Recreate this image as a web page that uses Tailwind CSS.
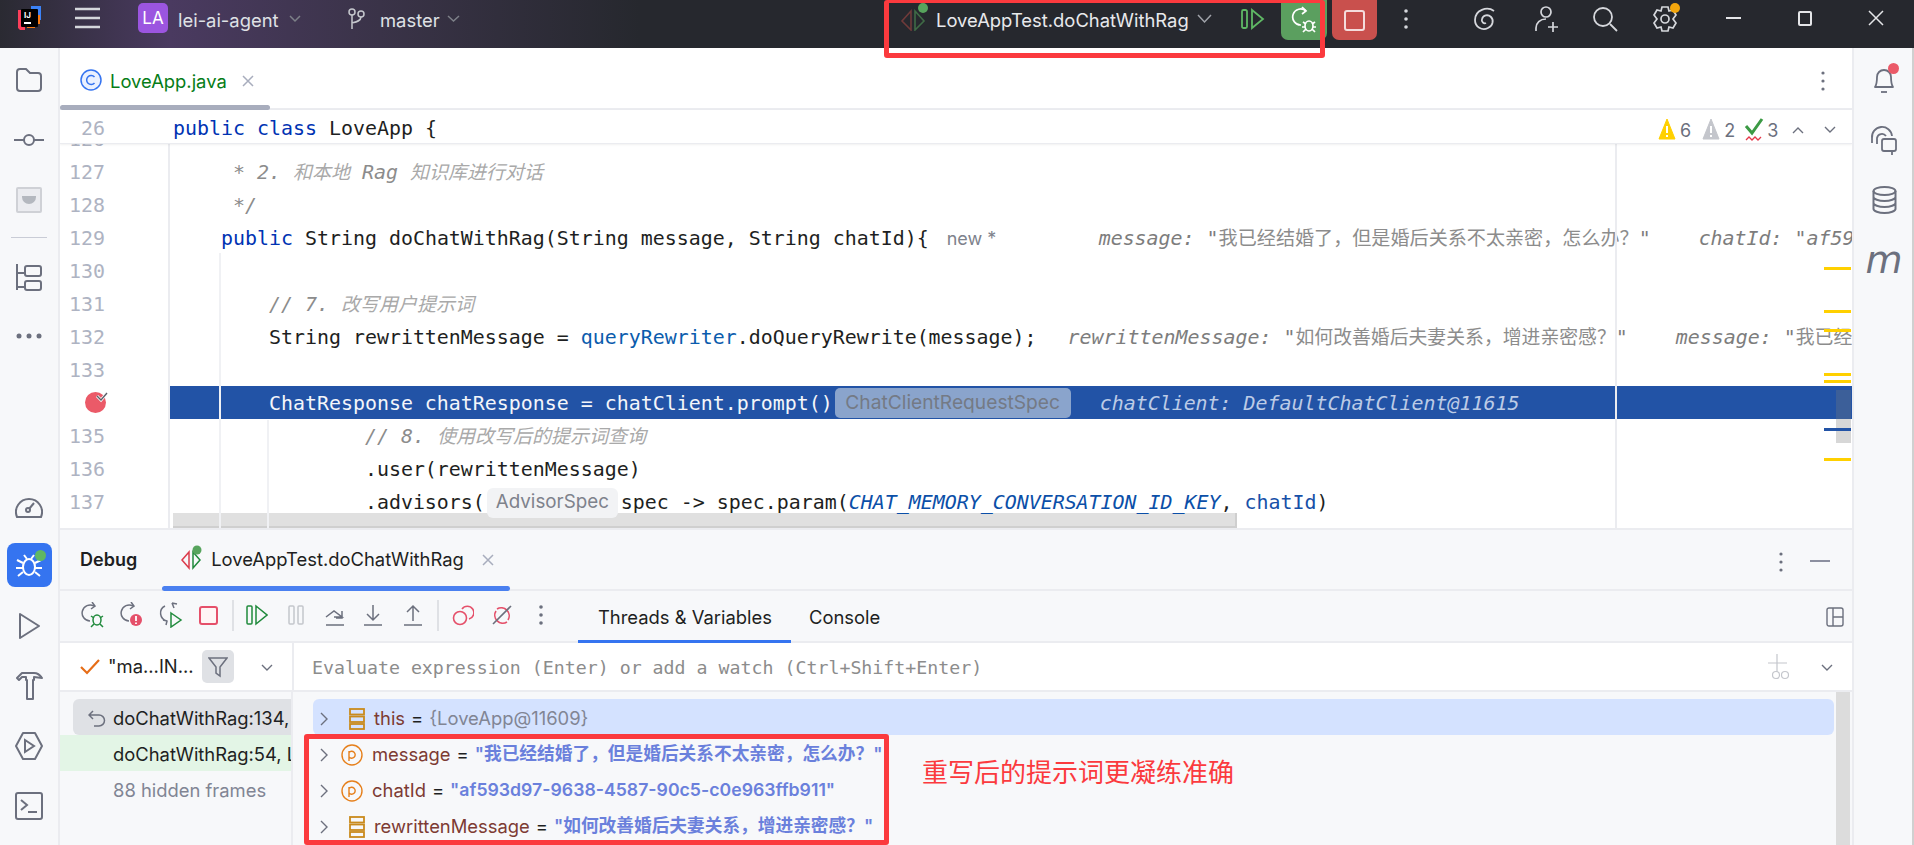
<!DOCTYPE html>
<html lang="zh">
<head>
<meta charset="UTF-8">
<title>LoveApp.java - lei-ai-agent</title>
<script src="https://cdn.jsdelivr.net/npm/@tailwindcss/browser@4"></script>
</head>
<body class="relative w-[1914px] h-[845px] overflow-hidden bg-[#f7f8fa] font-['Inter','Noto_Sans_CJK_SC',sans-serif] text-[#1e1f22]">

<!-- title bar -->
<header class="relative h-[48px] flex items-start bg-[#26282e] bg-[linear-gradient(90deg,#2a2a32_0,#4a3a60_170px,#3a3348_380px,#26282e_640px)] text-[#dfe1e5] text-[18.4px]">
  <svg class="absolute left-[17px] top-[6px]" width="24" height="24" viewBox="0 0 24 24"><path d="M1 4h7v20H3l-2-2z" fill="#fc3f5b"/><path d="M14 0h10v14h-10z" fill="#3b82f6"/><path d="M10 18h13v-9h-5v13h-8z" fill="#f97a12"/><rect x="4" y="3" width="17" height="18" rx="1" fill="#000"/><rect x="7" y="16" width="7" height="2" fill="#fff"/><text x="7" y="12" font-size="8" font-weight="700" fill="#fff">IJ</text></svg>
  <svg class="absolute left-[75px] top-[7px]" width="25" height="22" viewBox="0 0 25 22" fill="none" stroke="#d5d7dc" stroke-width="2.4"><path d="M0 2h25M0 11h25M0 20h25"/></svg>
  <div class="absolute left-[138px] top-[3px] w-[30px] h-[30px] rounded-[5px] bg-[#9b55e0] text-white flex items-center justify-center text-[17px] leading-none">LA</div>
  <span class="absolute left-[178px] top-[9px] leading-[22px]">lei-ai-agent</span>
  <svg class="absolute left-[289px] top-[15px]" width="12" height="8" viewBox="0 0 12 8" fill="none" stroke="#7d8088" stroke-width="1.5"><path d="M1 1l5 5 5-5"/></svg>
  <svg class="absolute left-[347px] top-[8px]" width="19" height="22" viewBox="0 0 19 22" fill="none" stroke="#c5c7cd" stroke-width="1.5"><circle cx="5" cy="4" r="3"/><circle cx="14" cy="6" r="3"/><path d="M5 7v14M14 9c0 4-5 5-9 6"/></svg>
  <span class="absolute left-[380px] top-[9px] leading-[22px]">master</span>
  <svg class="absolute left-[447px] top-[15px]" width="13" height="8" viewBox="0 0 13 8" fill="none" stroke="#7d8088" stroke-width="1.5"><path d="M1 1l5.500 5 5.500-5"/></svg>

  <svg class="absolute left-[900px] top-[3px]" width="30" height="28" viewBox="0 0 30 28" fill="none" stroke-width="1.6"><path d="M11 8L2 18l9 9z" stroke="#6f3a3a"/><path d="M15 8l9 10-9 9z" stroke="#3f6b46"/><circle cx="23" cy="5" r="5" fill="#57a45d" stroke="none"/></svg>
  <span class="absolute left-[936px] top-[9px] leading-[22px] text-[#e8e9ec]">LoveAppTest.doChatWithRag</span>
  <svg class="absolute left-[1197px] top-[14px]" width="15" height="10" viewBox="0 0 15 10" fill="none" stroke="#a0a3aa" stroke-width="1.5"><path d="M1 1l6.500 7L14 1"/></svg>
  <svg class="absolute left-[1241px] top-[8px]" width="24" height="22" viewBox="0 0 24 22" fill="none" stroke="#5fb865" stroke-width="1.8"><rect x="1" y="2" width="5" height="18" rx="1.500"/><path d="M11 2l11 9-11 9z"/></svg>
  <div class="absolute left-[1281px] top-0 w-[46px] h-[40px] rounded-b-[7px] bg-[#5b9f5f] flex items-center justify-center">
    <svg width="26" height="28" viewBox="0 0 26 28" fill="none" stroke="#fff" stroke-width="1.700"><path d="M15 5a8 8 0 1 0-5 14"/><path d="M11 1l4 4-4 3"/><ellipse cx="18" cy="20" rx="4" ry="5"/><path d="M12 16l3 2M24 16l-3 2M12 26l3-3M24 26l-3-3M11 21h3M25 21h-3"/></svg>
  </div>
  <div class="absolute left-[1332px] top-0 w-[45px] h-[40px] rounded-b-[7px] bg-[#c9504d] flex items-center justify-center">
    <div class="w-[21px] h-[21px] rounded-[3px] border-2 border-[#f4dcdc]"></div>
  </div>
  <svg class="absolute left-[1404px] top-[8px]" width="4" height="22" viewBox="0 0 4 22" fill="#d5d7dc"><circle cx="2" cy="3" r="1.800"/><circle cx="2" cy="11" r="1.800"/><circle cx="2" cy="19" r="1.800"/></svg>
  <svg class="absolute left-[1472px] top-[6px]" width="26" height="26" viewBox="0 0 26 26" fill="none" stroke="#d5d7dc" stroke-width="1.800"><path d="M22 5C15 0 3 4 3 14c0 7 7 11 13 8 5-2 6-8 3-11-3-3-8-2-9 2-1 3 2 5 4 4"/></svg>
  <svg class="absolute left-[1534px] top-[5px]" width="27" height="28" viewBox="0 0 27 28" fill="none" stroke="#d5d7dc" stroke-width="1.700"><circle cx="12" cy="7" r="5"/><path d="M2 26v-3c0-5 4-9 10-9M19 17v10M14 22h10"/></svg>
  <svg class="absolute left-[1592px] top-[6px]" width="26" height="26" viewBox="0 0 26 26" fill="none" stroke="#d5d7dc" stroke-width="1.800"><circle cx="11" cy="11" r="9"/><path d="M18 18l7 7"/></svg>
  <svg class="absolute left-[1652px] top-[5px]" width="26" height="28" viewBox="0 0 26 28" fill="none" stroke="#d5d7dc" stroke-width="1.700"><path d="M10 2h6l1 4 4-1 3 5-3 4 3 4-3 5-4-1-1 4h-6l-1-4-4 1-3-5 3-4-3-4 3-5 4 1z"/><circle cx="13" cy="14" r="4"/></svg>
  <div class="absolute left-[1670px] top-[3px] w-[10px] h-[10px] rounded-full bg-[#f2a60d]"></div>
  <div class="absolute left-[1726px] top-[17px] w-[15px] h-[2px] bg-[#e4e5e8]"></div>
  <div class="absolute left-[1798px] top-[11px] w-[14px] h-[15px] rounded-[2px] border-2 border-[#e4e5e8]"></div>
  <svg class="absolute left-[1868px] top-[10px]" width="16" height="16" viewBox="0 0 16 16" stroke="#e4e5e8" stroke-width="1.500"><path d="M1 1l14 14M15 1L1 15"/></svg>
</header>

<div class="flex h-[797px]">
  <!-- left tool rail -->
  <nav class="relative w-[60px] shrink-0 border-r-2 border-[#ebecf0] flex flex-col items-center">
    <svg class="mt-[19px]" width="28" height="26" viewBox="0 0 28 26" fill="none" stroke="#6c707e" stroke-width="2"><path d="M2 5c0-2 1-3 3-3h6l4 4h8c2 0 3 1 3 3v12c0 2-1 3-3 3H5c-2 0-3-1-3-3z"/></svg>
    <svg class="mt-[40px]" width="30" height="14" viewBox="0 0 30 14" fill="none" stroke="#6c707e" stroke-width="2"><circle cx="15" cy="7" r="5"/><path d="M0 7h10M20 7h10"/></svg>
    <div class="mt-[40px] w-[26px] h-[26px] rounded-[2px] border-2 border-[#cfd1d6] bg-[#ebecf0] flex items-center justify-center"><div class="w-[14px] h-[8px] rounded-b-full bg-[#b4b8bf]"></div></div>
    <div class="mt-[24px] w-[36px] h-[1px] bg-[#c9ccd6]"></div>
    <svg class="mt-[25px]" width="28" height="28" viewBox="0 0 28 28" fill="none" stroke="#6c707e" stroke-width="2"><path d="M2 1v26M2 10h8M2 24h8"/><rect x="10" y="3" width="16" height="10" rx="2"/><rect x="10" y="18" width="16" height="9" rx="2"/></svg>
    <svg class="mt-[42px]" width="26" height="6" viewBox="0 0 26 6" fill="#6c707e"><circle cx="3" cy="3" r="2.500"/><circle cx="13" cy="3" r="2.500"/><circle cx="23" cy="3" r="2.500"/></svg>
    <svg class="mt-[156px]" width="28" height="24" viewBox="0 0 28 24" fill="none" stroke="#6c707e" stroke-width="2"><path d="M2 22a13 13 0 1 1 24 0z"/><circle cx="13" cy="15" r="2"/><path d="M14 14l5-6"/></svg>
    <div class="mt-[24px] w-[45px] h-[44px] rounded-[8px] bg-[#3574f0] relative flex items-center justify-center">
      <svg width="28" height="28" viewBox="0 0 28 28" fill="none" stroke="#fff" stroke-width="2"><ellipse cx="14" cy="16" rx="6" ry="8"/><path d="M9 4l3 4M19 4l-3 4M2 9l6 3M26 9l-6 3M1 17h7M27 17h-7M3 25l5-4M25 25l-5-4"/></svg>
      <div class="absolute right-[6px] top-[7px] w-[11px] h-[11px] rounded-full bg-[#5fb865]"></div>
    </div>
    <svg class="mt-[25px]" width="24" height="28" viewBox="0 0 24 28" fill="none" stroke="#6c707e" stroke-width="2"><path d="M3 2l19 12L3 26z" stroke-linejoin="round"/></svg>
    <svg class="mt-[31px]" width="27" height="30" viewBox="0 0 27 30" fill="none" stroke="#6c707e" stroke-width="2"><path d="M6 2h12c3 0 6 2 8 5l-8-1v3h-1v19h-6V9h-1V6H6L3 9 1 7z" stroke-linejoin="round"/></svg>
    <svg class="mt-[30px]" width="28" height="30" viewBox="0 0 28 30" fill="none" stroke="#6c707e" stroke-width="2"><path d="M8 2h12l7 13-7 13H8L1 15z" stroke-linejoin="round"/><path d="M10 9l9 6-9 6z"/></svg>
    <svg class="mt-[31px]" width="28" height="28" viewBox="0 0 28 28" fill="none" stroke="#6c707e" stroke-width="2"><rect x="1" y="1" width="26" height="26" rx="2"/><path d="M6 8l6 5-6 5M13 20h9"/></svg>
  </nav>

  <div class="flex flex-col w-[1792px] shrink-0">
    <!-- editor -->
    <section class="relative h-[480px] bg-white overflow-hidden">
      <div class="relative h-[62px] border-b-2 border-[#ebecf0] flex items-start">
        <svg class="ml-[20px] mt-[21px]" width="22" height="22" viewBox="0 0 22 22" fill="#fff"><circle cx="11" cy="11" r="10" fill="#eaf1ff" stroke="#3574f0" stroke-width="1.500"/><path d="M14.500 8a4.500 4.500 0 1 0 0 6" fill="none" stroke="#3574f0" stroke-width="1.500"/></svg>
        <span class="ml-[8px] mt-[22px] leading-[22px] text-[18.4px] text-[#067d17]">LoveApp.java</span>
        <svg class="ml-[15px] mt-[27px]" width="12" height="12" viewBox="0 0 12 12" stroke="#a8adbd" stroke-width="1.500"><path d="M1 1l10 10M11 1L1 11"/></svg>
        <div class="absolute left-0 top-[57px] w-[210px] h-[5px] rounded-full bg-[#a8adbd]"></div>
        <svg class="absolute left-[1761px] top-[23px]" width="4" height="20" viewBox="0 0 4 20" fill="#6c707e"><circle cx="2" cy="2" r="1.600"/><circle cx="2" cy="10" r="1.600"/><circle cx="2" cy="18" r="1.600"/></svg>
      </div>

      <div class="relative h-[34px] pt-[5px] flex items-center font-['DejaVu_Sans_Mono','Noto_Sans_CJK_SC',monospace] text-[19.93px] border-b border-[#ebecf0] whitespace-pre z-10 bg-white shadow-[0_1px_2px_rgba(0,0,0,0.06)]">
        <span class="w-[45px] text-right text-[#aeb3c2]">26</span>
        <span class="ml-[68px]"><span class="text-[#0033b3]">public class</span> LoveApp {</span>
      </div>

      <!-- inspections widget -->
      <div class="absolute left-[1598px] top-[64px] z-20 h-[36px] w-[193px] flex items-center text-[18px] text-[#6c707e]">
        <svg width="18" height="24" viewBox="0 0 18 24"><path d="M9 1l8 20H1z" fill="#ffd000" stroke="#ffd000" stroke-linejoin="round"/><path d="M9 8v7M9 17v2" stroke="#fff" stroke-width="2"/></svg>
        <span class="ml-[4px]">6</span>
        <svg class="ml-[11px]" width="18" height="24" viewBox="0 0 18 24"><path d="M9 1l8 20H1z" fill="#c4c6cc" stroke="#c4c6cc" stroke-linejoin="round"/><path d="M9 8v7M9 17v2" stroke="#fff" stroke-width="2"/></svg>
        <span class="ml-[4px]">2</span>
        <svg class="ml-[9px]" width="20" height="26" viewBox="0 0 20 26" fill="none"><path d="M2 9l6 7L18 2" stroke="#3c9a45" stroke-width="3"/><path d="M2 23l3-3 3 3 3-3 3 3 3-3" stroke="#e5384a" stroke-width="1.300"/></svg>
        <span class="ml-[3px]">3</span>
        <svg class="ml-[14px]" width="12" height="8" viewBox="0 0 12 8" fill="none" stroke="#6c707e" stroke-width="1.400"><path d="M1 7l5-5 5 5"/></svg>
        <svg class="ml-[20px]" width="12" height="8" viewBox="0 0 12 8" fill="none" stroke="#6c707e" stroke-width="1.400"><path d="M1 1l5 5 5-5"/></svg>
      </div>

      <!-- popup peeking up from below the fold -->
      <div class="absolute left-[113px] top-[465px] w-[1064px] h-[15px] bg-[#e0e0e0] border-b-2 border-r-2 border-[#cfcfcf] z-[5]"></div>

      <!-- code rows -->
      <div class="absolute left-0 top-[74px] w-[1792px] z-[7] font-['DejaVu_Sans_Mono','Noto_Sans_CJK_SC',monospace] text-[19.93px] [&>div]:h-[33px] [&>div]:flex [&>div]:items-center [&>div]:whitespace-pre [&>div>span]:shrink-0 [&>div>span]:translate-y-[1px]">
        <div><span class="w-[45px] text-right text-[#aeb3c2]">126</span></div>
        <div><span class="w-[45px] text-right text-[#aeb3c2]">127</span><span class="ml-[68px] italic text-[#8c8c8c]">     * 2. <span class="text-[19px] text-[#a9a9a9]">和本地</span> Rag <span class="text-[19px] text-[#a9a9a9]">知识库进行对话</span></span></div>
        <div><span class="w-[45px] text-right text-[#aeb3c2]">128</span><span class="ml-[68px] italic text-[#8c8c8c]">     */</span></div>
        <div><span class="w-[45px] text-right text-[#aeb3c2]">129</span><span class="ml-[68px]">    <span class="text-[#0033b3]">public</span> String doChatWithRag(String message, String chatId){</span><span class="ml-[18px] w-[152px] font-['Inter'] text-[18px] text-[#7e828c]">new *</span><span class="italic text-[#7d7d7d]">message: "<span class="text-[19.1px] not-italic text-[#8c8c8c]">我已经结婚了，但是婚后关系不太亲密，怎么办？</span>"    chatId: "af59</span></div>
        <div><span class="w-[45px] text-right text-[#aeb3c2]">130</span></div>
        <div><span class="w-[45px] text-right text-[#aeb3c2]">131</span><span class="ml-[68px] italic text-[#8c8c8c]">        // 7. <span class="text-[19px] text-[#a9a9a9]">改写用户提示词</span></span></div>
        <div><span class="w-[45px] text-right text-[#aeb3c2]">132</span><span class="ml-[68px]">        String rewrittenMessage = <span class="text-[#0b5cad]">queryRewriter</span>.doQueryRewrite(message);</span><span class="ml-[31px] italic text-[#7d7d7d]">rewrittenMessage: "<span class="text-[18.85px] not-italic text-[#8c8c8c]">如何改善婚后夫妻关系，增进亲密感？</span>"    message: "<span class="text-[18.85px] not-italic text-[#8c8c8c]">我已经结婚了</span></span></div>
        <div><span class="w-[45px] text-right text-[#aeb3c2]">133</span></div>
        <div class="relative">
          <div class="absolute left-[25px] top-[6px] w-[21px] h-[21px] rounded-full bg-[#eb5a68]"></div>
          <svg class="absolute left-[35px] top-[5px]" width="14" height="12" viewBox="0 0 14 12" fill="none" stroke="#f7f8fa" stroke-width="3"><path d="M2 5l4 4 6-7"/></svg>
          <svg class="absolute left-[35px] top-[5px]" width="14" height="12" viewBox="0 0 14 12" fill="none" stroke="#5a5d66" stroke-width="1.300"><path d="M2 5l4 4 6-7"/></svg>
          <div class="ml-[110px] pl-[3px] pt-[2px] w-[1682px] h-[33px] bg-[#2253a6] text-[#f4f6fa] flex items-center">        ChatResponse chatResponse = chatClient.prompt()<span class="ml-[2px] -mt-[2px] w-[236px] h-[30px] rounded-[5px] bg-[#8aa4cc] text-[#747a85] font-['Inter'] text-[19.2px] flex items-center justify-center">ChatClientRequestSpec</span><span class="ml-[29px] italic text-[#bccbe6]">chatClient: DefaultChatClient@11615</span></div>
        </div>
        <div><span class="w-[45px] text-right text-[#aeb3c2]">135</span><span class="ml-[68px] italic text-[#8c8c8c]">                // 8. <span class="text-[19px] text-[#a9a9a9]">使用改写后的提示词查询</span></span></div>
        <div><span class="w-[45px] text-right text-[#aeb3c2]">136</span><span class="ml-[68px]">                .user(rewrittenMessage)</span></div>
        <div><span class="w-[45px] text-right text-[#aeb3c2]">137</span><span class="ml-[68px]">                .advisors(</span><span class="ml-[2px] w-[131px] h-[30px] rounded-[6px] bg-[#f2f3f5] text-[#7e828c] font-['Inter'] text-[18.8px] flex items-center justify-center">AdvisorSpec</span><span class="ml-[3px]">spec -&gt; spec.param(<span class="italic text-[#0b4fa8]">CHAT_MEMORY_CONVERSATION_ID_KEY</span>, <span class="text-[#1750a8]">chatId</span>)</span></div>
      </div>

      <!-- guides over the rows -->
      <div class="absolute left-[108px] top-[96px] bottom-0 w-[2px] bg-[#ebecf0] z-[9]"></div>
      <div class="absolute left-[159px] top-[205px] bottom-0 w-[2px] bg-[#f0f1f4] z-[9]"></div>
      <div class="absolute left-[207px] top-[372px] bottom-0 w-[2px] bg-[#f0f1f4] z-[9]"></div>
      <div class="absolute left-[1555px] top-[96px] bottom-0 w-[2px] bg-[#ebecf0] z-[9]"></div>

      <!-- error stripe -->
      <div class="absolute left-[1776px] top-[342px] w-[15px] h-[53px] bg-[#7a7a7a]/30 z-[9]"></div>
      <div class="absolute left-[1764px] top-[219px] w-[27px] h-[3px] bg-[#ffd000] z-[10]"></div>
      <div class="absolute left-[1764px] top-[262px] w-[27px] h-[3px] bg-[#ffd000] z-[10]"></div>
      <div class="absolute left-[1764px] top-[281px] w-[27px] h-[3px] bg-[#ffd000] z-[10]"></div>
      <div class="absolute left-[1764px] top-[325px] w-[27px] h-[3px] bg-[#ffd000] z-[10]"></div>
      <div class="absolute left-[1764px] top-[332px] w-[27px] h-[3px] bg-[#ffd000] z-[10]"></div>
      <div class="absolute left-[1764px] top-[380px] w-[27px] h-[3px] bg-[#2253a6] z-[10]"></div>
      <div class="absolute left-[1764px] top-[410px] w-[27px] h-[3px] bg-[#ffd000] z-[10]"></div>
    </section>

    <!-- debug tool window -->
    <section class="relative h-[317px] border-t-2 border-[#ebecf0] flex flex-col">
      <div class="relative h-[61px] shrink-0 flex items-center border-b-2 border-[#ebecf0]">
        <span class="ml-[20px] text-[18px] font-semibold">Debug</span>
        <svg class="ml-[43px] -mt-[4px]" width="24" height="26" viewBox="0 0 24 26" fill="none" stroke-width="1.500"><path d="M9 7L2 15l7 8z" stroke="#db3b4b"/><path d="M13 7l7 8-7 8z" stroke="#208a3c"/><circle cx="17" cy="5" r="4.500" fill="#57a45d" stroke="none"/></svg>
        <span class="ml-[7px] text-[18.4px]">LoveAppTest.doChatWithRag</span>
        <svg class="ml-[18px]" width="12" height="12" viewBox="0 0 12 12" stroke="#a8adbd" stroke-width="1.500"><path d="M1 1l10 10M11 1L1 11"/></svg>
        <div class="absolute left-[102px] bottom-[-2px] w-[348px] h-[5px] rounded-full bg-[#4a80f0]"></div>
        <svg class="absolute left-[1719px] top-[22px]" width="4" height="20" viewBox="0 0 4 20" fill="#6c707e"><circle cx="2" cy="2" r="1.600"/><circle cx="2" cy="10" r="1.600"/><circle cx="2" cy="18" r="1.600"/></svg>
        <div class="absolute left-[1750px] top-[30px] w-[20px] h-[2px] bg-[#8c8fa0]"></div>
      </div>

      <!-- toolbar -->
      <div class="relative h-[52px] shrink-0 border-b-2 border-[#ebecf0]">
        <svg class="absolute left-[21px] top-[11px]" width="24" height="26" viewBox="0 0 24 26" fill="none" stroke-width="1.500"><path d="M13 4a8 8 0 1 0-4 15" stroke="#6c707e"/><path d="M11 0l3 4-4 3" stroke="#6c707e"/><ellipse cx="16" cy="18" rx="4" ry="5" stroke="#208a3c"/><path d="M10 14l3 2M22 14l-3 2M10 25l3-3M22 25l-3-3" stroke="#208a3c"/></svg>
        <svg class="absolute left-[60px] top-[11px]" width="24" height="26" viewBox="0 0 24 26" fill="none" stroke-width="1.500"><path d="M13 4a8 8 0 1 0-4 15" stroke="#6c707e"/><path d="M11 0l3 4-4 3" stroke="#6c707e"/><circle cx="16" cy="18" r="6" fill="#e5506a"/><path d="M16 14v5M16 20.500v1.500" stroke="#fff" stroke-width="1.800"/></svg>
        <svg class="absolute left-[99px] top-[11px]" width="24" height="26" viewBox="0 0 24 26" fill="none" stroke-width="1.500"><path d="M6 4a8 8 0 0 0 2 15M4 18l4 1-1 4M13 1l2 5M13 1l5 1" stroke="#6c707e"/><path d="M12 11l10 7-10 7z" stroke="#208a3c"/></svg>
        <div class="absolute left-[139px] top-[15px] w-[19px] h-[19px] rounded-[3px] border-2 border-[#e5506a] bg-[#fff5f5]"></div>
        <div class="absolute left-[172px] top-[9px] w-[2px] h-[31px] bg-[#dfe1e5]"></div>
        <svg class="absolute left-[186px] top-[13px]" width="22" height="22" viewBox="0 0 22 22" fill="none" stroke="#208a3c" stroke-width="1.500"><rect x="1" y="2" width="5" height="18" rx="1"/><path d="M10 2l11 9-11 9z"/></svg>
        <svg class="absolute left-[228px] top-[14px]" width="16" height="20" viewBox="0 0 16 20" fill="none" stroke="#c4c6cc" stroke-width="1.500"><rect x="1" y="1" width="5" height="18" rx="1"/><rect x="10" y="1" width="5" height="18" rx="1"/></svg>
        <svg class="absolute left-[265px] top-[12px]" width="20" height="24" viewBox="0 0 20 24" fill="none" stroke="#6c707e" stroke-width="1.500"><path d="M1 22h18M1 14l8-6 8 6h-8M17 8v7h-6"/></svg>
        <svg class="absolute left-[304px] top-[12px]" width="18" height="24" viewBox="0 0 18 24" fill="none" stroke="#6c707e" stroke-width="1.500"><path d="M0 22h18M9 2v15M3 11l6 6 6-6"/></svg>
        <svg class="absolute left-[344px] top-[12px]" width="18" height="24" viewBox="0 0 18 24" fill="none" stroke="#6c707e" stroke-width="1.500"><path d="M0 22h18M9 18V3M3 9l6-6 6 6"/></svg>
        <div class="absolute left-[377px] top-[9px] w-[2px] h-[31px] bg-[#dfe1e5]"></div>
        <svg class="absolute left-[392px] top-[13px]" width="22" height="22" viewBox="0 0 22 22" fill="none" stroke="#e5506a" stroke-width="1.600"><circle cx="8" cy="14" r="6.500"/><path d="M10 5a6.500 6.500 0 1 1 7 10"/></svg>
        <svg class="absolute left-[431px] top-[13px]" width="22" height="22" viewBox="0 0 22 22" fill="none" stroke-width="1.600"><path d="M6 5a8 8 0 0 1 11 11M16 18A8 8 0 0 1 5 7" stroke="#e5506a"/><path d="M2 20L20 2" stroke="#6c707e"/></svg>
        <svg class="absolute left-[479px] top-[14px]" width="4" height="20" viewBox="0 0 4 20" fill="#6c707e"><circle cx="2" cy="2" r="1.800"/><circle cx="2" cy="10" r="1.800"/><circle cx="2" cy="18" r="1.800"/></svg>
        <span class="absolute left-[538px] top-[14px] text-[18.4px] leading-[24px]">Threads &amp; Variables</span>
        <div class="absolute left-[518px] bottom-[-2px] w-[213px] h-[3px] bg-[#3574f0]"></div>
        <span class="absolute left-[749px] top-[14px] text-[18.4px] leading-[24px]">Console</span>
        <svg class="absolute left-[1766px] top-[16px]" width="18" height="20" viewBox="0 0 18 20" fill="none" stroke="#6c707e" stroke-width="1.400"><rect x="1" y="1" width="16" height="18" rx="2"/><path d="M7 1v18M7 10h10"/></svg>
      </div>

      <!-- threads combo + evaluate field -->
      <div class="relative h-[49px] shrink-0 bg-white border-b-2 border-[#ebecf0] flex items-center">
        <svg class="ml-[20px]" width="20" height="16" viewBox="0 0 20 16" fill="none" stroke="#e66d17" stroke-width="2.200"><path d="M1 8l6 6L19 1"/></svg>
        <span class="ml-[8px] mt-[1px] text-[18.4px]">"ma...IN...</span>
        <div class="absolute left-[142px] top-[7px] w-[32px] h-[33px] rounded-[5px] bg-[#dfe1e5] flex items-center justify-center">
          <svg width="20" height="22" viewBox="0 0 20 22" fill="none" stroke="#6c707e" stroke-width="1.500"><path d="M1 2h18l-7 9v9l-4-3v-6z"/></svg>
        </div>
        <svg class="absolute left-[201px] top-[21px]" width="12" height="8" viewBox="0 0 12 8" fill="none" stroke="#6c707e" stroke-width="1.400"><path d="M1 1l5 5 5-5"/></svg>
        <div class="absolute left-[232px] top-0 bottom-0 w-[2px] bg-[#ebecf0]"></div>
        <span class="absolute left-[252px] top-[13px] leading-[24px] font-['DejaVu_Sans_Mono',monospace] text-[18.25px] text-[#8c8c8c]">Evaluate expression (Enter) or add a watch (Ctrl+Shift+Enter)</span>
        <svg class="absolute left-[1707px] top-[10px]" width="24" height="28" viewBox="0 0 24 28" fill="none" stroke="#c4c6cc" stroke-width="1.200"><path d="M10 1v18M1 10h19"/><circle cx="9" cy="22" r="3.500"/><circle cx="18" cy="22" r="3.500"/></svg>
        <svg class="absolute left-[1761px] top-[21px]" width="12" height="8" viewBox="0 0 12 8" fill="none" stroke="#6c707e" stroke-width="1.400"><path d="M1 1l5 5 5-5"/></svg>
      </div>

      <!-- frames + variables -->
      <div class="flex-1 flex min-h-0 relative overflow-hidden text-[18.4px]">
        <div class="w-[233px] shrink-0 border-r-2 border-[#ebecf0] pt-[7px] overflow-hidden whitespace-nowrap [&>div]:pt-[3px]">
          <div class="ml-[13px] h-[36px] rounded-l-[6px] bg-[#dfe1e5] flex items-center pl-[15px]">
            <svg class="shrink-0" width="18" height="18" viewBox="0 0 18 18" fill="none" stroke="#6c707e" stroke-width="1.500"><path d="M5 1L1 5l4 4M1 5h10a5.500 5.500 0 0 1 0 11H6"/></svg>
            <span class="ml-[7px]">doChatWithRag:134, LoveApp</span>
          </div>
          <div class="h-[36px] bg-[#e3f5e6] flex items-center pl-[53px]">doChatWithRag:54, LoveAppTest</div>
          <div class="h-[36px] flex items-center pl-[53px] text-[#818594]">88 hidden frames</div>
        </div>
        <div class="flex-1 pt-[7px] pl-[20px] pr-[18px] whitespace-nowrap [&>div]:h-[36px] [&>div]:pt-[3px] [&>div]:flex [&>div]:items-center">
          <div class="rounded-[6px] bg-[#d4e2ff]">
            <svg class="ml-[7px]" width="8" height="14" viewBox="0 0 8 14" fill="none" stroke="#6c707e" stroke-width="1.400"><path d="M1 1l6 6-6 6"/></svg>
            <svg class="ml-[21px]" width="16" height="22" viewBox="0 0 16 22" fill="none" stroke="#c98a1c" stroke-width="1.800"><rect x="1" y="1" width="14" height="5.500"/><rect x="1" y="8.500" width="14" height="5.500"/><rect x="1" y="16" width="14" height="5"/></svg>
            <span class="ml-[9px] text-[#7d3b33]">this</span><span class="ml-[6px]">=</span><span class="ml-[6px] text-[#818594]">{LoveApp@11609}</span>
          </div>
          <div>
            <svg class="ml-[7px]" width="8" height="14" viewBox="0 0 8 14" fill="none" stroke="#6c707e" stroke-width="1.400"><path d="M1 1l6 6-6 6"/></svg>
            <svg class="ml-[13px]" width="22" height="22" viewBox="0 0 22 22" fill="none" stroke="#e6801c" stroke-width="1.400"><circle cx="11" cy="11" r="10"/><path d="M8 17V7M8 8.500a3.500 3.500 0 1 1 0 4.500"/></svg>
            <span class="ml-[9px] text-[#7d3b33]">message</span><span class="ml-[6px]">=</span><span class="ml-[6px] font-semibold text-[17.7px] text-[#6a80dc]">"我已经结婚了，但是婚后关系不太亲密，怎么办？"</span>
          </div>
          <div>
            <svg class="ml-[7px]" width="8" height="14" viewBox="0 0 8 14" fill="none" stroke="#6c707e" stroke-width="1.400"><path d="M1 1l6 6-6 6"/></svg>
            <svg class="ml-[13px]" width="22" height="22" viewBox="0 0 22 22" fill="none" stroke="#e6801c" stroke-width="1.400"><circle cx="11" cy="11" r="10"/><path d="M8 17V7M8 8.500a3.500 3.500 0 1 1 0 4.500"/></svg>
            <span class="ml-[9px] text-[#7d3b33]">chatId</span><span class="ml-[6px]">=</span><span class="ml-[6px] font-semibold text-[17.7px] text-[#6a80dc]">"af593d97-9638-4587-90c5-c0e963ffb911"</span>
          </div>
          <div>
            <svg class="ml-[7px]" width="8" height="14" viewBox="0 0 8 14" fill="none" stroke="#6c707e" stroke-width="1.400"><path d="M1 1l6 6-6 6"/></svg>
            <svg class="ml-[21px]" width="16" height="22" viewBox="0 0 16 22" fill="none" stroke="#c98a1c" stroke-width="1.800"><rect x="1" y="1" width="14" height="5.500"/><rect x="1" y="8.500" width="14" height="5.500"/><rect x="1" y="16" width="14" height="5"/></svg>
            <span class="ml-[9px] text-[#7d3b33]">rewrittenMessage</span><span class="ml-[6px]">=</span><span class="ml-[6px] font-semibold text-[17.7px] text-[#6a80dc]">"如何改善婚后夫妻关系，增进亲密感？"</span>
          </div>
        </div>
        <div class="absolute right-[2px] top-0 bottom-0 w-[14px] bg-[#dcdcdc]"></div>
      </div>
    </section>
  </div>

  <!-- right tool rail -->
  <aside class="relative flex-1 border-l-2 border-[#ebecf0] flex flex-col items-center">
    <div class="relative mt-[18px]">
      <svg width="26" height="30" viewBox="0 0 26 30" fill="none" stroke="#6c707e" stroke-width="1.800"><path d="M4 21c2-3 2-6 2-10s3-7 7-7 7 3 7 7 0 7 2 10z" stroke-linejoin="round"/><path d="M10 26h6"/></svg>
      <div class="absolute right-[-2px] top-[-3px] w-[11px] h-[11px] rounded-full bg-[#eb5a68]"></div>
    </div>
    <svg class="mt-[29px]" width="28" height="30" viewBox="0 0 28 30" fill="none" stroke="#6c707e" stroke-width="1.800"><path d="M2 18V13a10 10 0 0 1 20-2M7 19v-6a5 5 0 0 1 9-2"/><rect x="12" y="14" width="14" height="12" rx="2"/><path d="M22 26v4"/></svg>
    <svg class="mt-[31px]" width="25" height="28" viewBox="0 0 25 28" fill="none" stroke="#6c707e" stroke-width="2"><ellipse cx="12.500" cy="5" rx="11" ry="4"/><path d="M1.500 5v18c0 2 5 4 11 4s11-2 11-4V5M1.500 11c0 2 5 4 11 4s11-2 11-4M1.500 17c0 2 5 4 11 4s11-2 11-4"/></svg>
    <span class="mt-[24px] text-[38px] leading-[44px] italic font-['DejaVu_Sans',sans-serif] text-[#6c707e]">m</span>
  </aside>
</div>

<div class="absolute right-0 top-[48px] bottom-0 w-[2px] bg-[#d0d0d0]"></div>

<!-- red annotations -->
<div class="absolute left-[884px] top-0 w-[441px] h-[58px] rounded-[3px] border-x-[5px] border-b-[5px] border-t-[3px] border-[#fb3a3e]"></div>
<div class="absolute left-[304px] top-[734px] w-[585px] h-[111px] rounded-[3px] border-[5px] border-[#fb3a3e]"></div>
<span class="absolute left-[922px] top-[755px] leading-[36px] text-[26px] text-[#fb3a3e] whitespace-nowrap">重写后的提示词更凝练准确</span>
</body>
</html>
